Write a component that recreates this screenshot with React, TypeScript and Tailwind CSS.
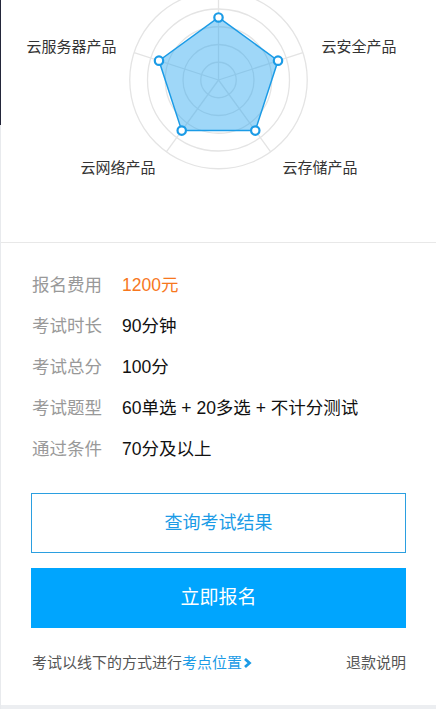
const FONT = { fontFamily: '"Liberation Sans", "Noto Sans CJK SC", sans-serif' };

const CX = 217.5;
const CY = 80;
const R = 88.75;
const AXES = ["top", "right", "bottomRight", "bottomLeft", "left"];

function pt(i: number, r: number): [number, number] {
  const a = -Math.PI / 2 + (i * 2 * Math.PI) / 5;
  return [CX + r * Math.cos(a), CY + r * Math.sin(a)];
}

function RadarChart() {
  const values = [0.705, 0.705, 0.705, 0.705, 0.705];
  const poly = values.map((v, i) => pt(i, v * R).join(",")).join(" ");
  const rings = [1, 2, 3, 4, 5].map((k) => (R * k) / 5);

  return (
    <svg width="434" height="242" viewBox="0 0 434 242" className="block">
      {rings.map((r) => (
        <circle key={r} cx={CX} cy={CY} r={r} fill="none" stroke="#e4e4e4" strokeWidth="1.3" />
      ))}
      {AXES.map((a, i) => {
        const [x, y] = pt(i, R);
        return <line key={a} x1={CX} y1={CY} x2={x} y2={y} stroke="#e4e4e4" strokeWidth="1.3" />;
      })}
      <polygon points={poly} fill="#2aa6f0" fillOpacity="0.45" stroke="#1b9be6" strokeWidth="1.5" />
      {values.map((v, i) => {
        const [x, y] = pt(i, v * R);
        return <circle key={i} cx={x} cy={y} r="4.2" fill="#fff" stroke="#1b9be6" strokeWidth="2.2" />;
      })}
      <g fill="#333" fontSize="15" style={FONT} dominantBaseline="central">
        <text x="115.5" y="46" textAnchor="end">云服务器产品</text>
        <text x="320.5" y="46" textAnchor="start">云安全产品</text>
        <text x="117" y="167" textAnchor="middle">云网络产品</text>
        <text x="319" y="167" textAnchor="middle">云存储产品</text>
      </g>
    </svg>
  );
}

const ROWS: { label: string; value: string; accent?: boolean }[] = [
  { label: "报名费用", value: "1200元", accent: true },
  { label: "考试时长", value: "90分钟" },
  { label: "考试总分", value: "100分" },
  { label: "考试题型", value: "60单选 + 20多选 + 不计分测试" },
  { label: "通过条件", value: "70分及以上" },
];

export default function App() {
  return (
    <div className="flex h-[709px] w-full bg-[#eceef1]" style={FONT}>
      {/* left edge of the page behind */}
      <div className="flex w-[2px] flex-col">
        <div className="h-[125px] bg-[#23263a]" />
        <div className="flex-1 bg-[#e8eaed]" />
      </div>

      <div className="mb-[4px] flex flex-1 flex-col bg-white">
        {/* Chart */}
        <div className="h-[243px] border-b border-[#e8e8e8]">
          <RadarChart />
        </div>

        {/* Info */}
        <div className="pl-[31px] pt-[22px]">
          {ROWS.map((row) => (
            <div key={row.label} className="flex h-[41px] items-center text-[17.5px]">
              <span className="w-[90px] shrink-0 text-[#999]">{row.label}</span>
              <span className={row.accent ? "text-[#f7771e]" : "text-[#111]"}>{row.value}</span>
            </div>
          ))}
        </div>

        {/* Actions */}
        <div className="flex flex-col gap-[15px] px-[30px] pt-[23px]">
          <button className="flex h-[60px] w-[375px] items-center justify-center border border-[#2b9fe0] text-[18px] text-[#1b9be6]">
            查询考试结果
          </button>
          <button className="flex h-[60px] w-[375px] items-center justify-center bg-[#00a5fe] text-[19px] text-white">
            立即报名
          </button>
        </div>

        {/* Footer */}
        <div className="flex w-[405px] items-center justify-between pl-[31px] pt-[25px] text-[15px] leading-[20px]">
          <div className="flex items-center text-[#555]">
            考试以线下的方式进行
            <span className="text-[#1b9be6]">考点位置</span>
            <svg width="9" height="12" viewBox="0 0 9 12" className="ml-[1px]">
              <path d="M2 2 L6.5 6 L2 10" fill="none" stroke="#1b9be6" strokeWidth="2.8" />
            </svg>
          </div>
          <span className="text-[#555]">退款说明</span>
        </div>
      </div>
    </div>
  );
}
